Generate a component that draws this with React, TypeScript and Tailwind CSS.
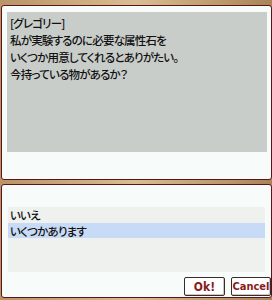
const jp = { fontFamily: '"Noto Sans CJK JP", "Noto Sans", sans-serif' };
const btn = { fontFamily: '"DejaVu Sans Condensed", "DejaVu Sans", sans-serif' };

const lines = [
  "[グレゴリー]",
  "私が実験するのに必要な属性石を",
  "いくつか用意してくれるとありがたい。",
  "今持っている物があるか？",
];

const choices = ["いいえ", "いくつかあります"];

export default function App() {
  return (
    <div className="w-[272px] h-[300px] overflow-hidden flex flex-col bg-gradient-to-r from-[#b89468] via-[#d9bd92] to-[#a88458]">
      <div className="h-[5px] shrink-0" />

      <div className="ml-[1px] h-[175px] shrink-0 border border-[#5e1414] rounded-[3px] bg-[#f7fbf9] pl-[5px] pt-[6px]">
        <div
          className="w-[260px] h-[140px] bg-[#c9cdca] pl-[3px] pt-[3px] text-[11.5px] leading-[17px] tracking-[-0.8px] text-[#111] [font-feature-settings:'palt'] font-medium"
          style={jp}
        >
          {lines.map((l) => (
            <div key={l} className="whitespace-nowrap">{l}</div>
          ))}
        </div>
      </div>

      <div className="h-[4px] shrink-0" />

      <div className="ml-[1px] h-[114px] shrink-0 border border-[#5e1414] rounded-[3px] bg-[#f7fbf9] pl-[6px] pt-[22px] flex flex-col">
        <div
          className="w-[257px] h-[65px] bg-[#eef1ee] text-[11.5px] leading-[16px] tracking-[-0.8px] text-[#111] [font-feature-settings:'palt'] font-medium"
          style={jp}
        >
          {choices.map((c, i) => (
            <div
              key={c}
              className={i === 1 ? "bg-[#c8dbf6] pl-[2px] h-[15px]" : "pl-[2px] h-[16px]"}
            >
              {c}
            </div>
          ))}
        </div>
        <div className="flex justify-end gap-[6px] mt-[5px]">
          <button
            className="w-[41px] h-[19px] bg-white border border-[#3a2a2a] rounded-[2px] shadow-[inset_-1px_-1px_0_#c8c8c8] text-[12px] font-bold text-[#8a1c1c] leading-none"
            style={btn}
          >
            Ok!
          </button>
          <button
            className="w-[40px] h-[19px] bg-white border border-[#3a2a2a] rounded-[2px] shadow-[inset_-1px_-1px_0_#c8c8c8] text-[11px] font-bold text-[#8a1c1c] leading-none"
            style={btn}
          >
            Cancel
          </button>
        </div>
      </div>
    </div>
  );
}
